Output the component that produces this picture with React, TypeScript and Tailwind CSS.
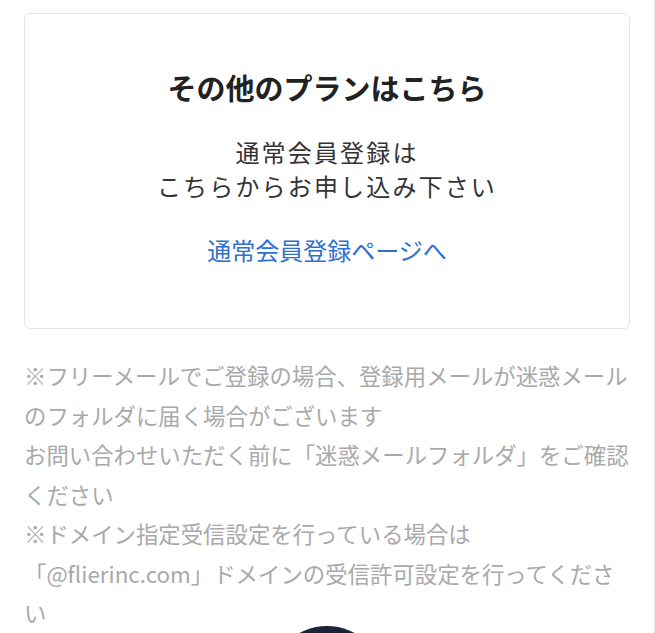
// Plan selection panel — "other plans" card with the free-mail notes underneath.

const FONT = { fontFamily: '"Noto Sans CJK JP", "Noto Sans", sans-serif' };

const NOTES = [
  "※フリーメールでご登録の場合、登録用メールが迷惑メールのフォルダに届く場合がございます",
  "お問い合わせいただく前に「迷惑メールフォルダ」をご確認ください",
  "※ドメイン指定受信設定を行っている場合は",
  "「@flierinc.com」ドメインの受信許可設定を行ってください",
];

export default function App() {
  return (
    <div
      className="relative h-[633px] w-full overflow-hidden border-r border-[#e6e6e6] bg-white px-[24px] pt-[13px]"
      style={FONT}
    >
      {/* ── Other plans card ─────────────────────────────────────────────── */}
      <div className="flex w-[606px] flex-col items-center rounded-[6px] border border-[#e4e4e4] pt-[53px] pb-[61px] text-center">
        <h2 className="text-[29px] leading-[40px] font-bold text-[#222]">その他のプランはこちら</h2>
        <p className="mt-[28px] text-[24px] leading-[34px] tracking-[0.09em] text-[#333]">
          通常会員登録は
          <br />
          こちらからお申し込み下さい
        </p>
        <a href="#" className="mt-[30px] text-[24px] leading-[34px] text-[#2f6fcf]">
          通常会員登録ページへ
        </a>
      </div>

      {/* ── Notes ────────────────────────────────────────────────────────── */}
      <div className="mt-[27px] w-[606px] text-[22.4px] leading-[39.5px] text-[#a9a9a9]">
        {NOTES.map((line, i) => (
          <p key={i}>{line}</p>
        ))}
      </div>

      {/* floating round button, cut off at the bottom */}
      <div className="absolute top-[626px] left-[269px] h-[116px] w-[116px] rounded-full bg-[#1f2337]" />
    </div>
  );
}
